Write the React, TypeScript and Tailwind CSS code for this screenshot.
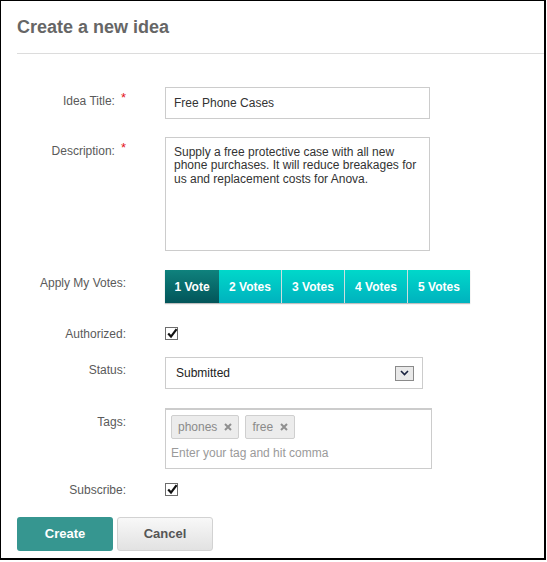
import React from "react";

const descriptionLines = [
  "Supply a free protective case with all new",
  "phone purchases. It will reduce breakages for",
  "us and replacement costs for Anova.",
];

const votes = ["1 Vote", "2 Votes", "3 Votes", "4 Votes", "5 Votes"];

function Label({ text, required, className = "" }: { text: string; required?: boolean; className?: string }) {
  return (
    <div className={`w-[125px] shrink-0 text-right text-[12px] leading-[16px] text-[#5a5a5a] ${className}`}>
      {text}
      {required && <span className="relative -top-[3px] ml-[6px] text-[13px] leading-none text-[#e4161b]">*</span>}
    </div>
  );
}

function Checkbox() {
  return (
    <div className="relative h-[13px] w-[13px] border border-[#6d6d6d] bg-white">
      <svg viewBox="0 0 13 13" className="absolute -top-px left-0 h-[13px] w-[13px]">
        <path d="M2.2 6.6 L5 9.6 L10.6 2.2" fill="none" stroke="#111" strokeWidth="2.2" />
      </svg>
    </div>
  );
}

function Chip({ text }: { text: string }) {
  return (
    <div className="flex h-[24px] items-center gap-[7px] rounded-[2px] border border-[#cfcfcf] bg-[#ececec] pl-[6px] pr-[6px] text-[12px] text-[#8a8a8a]">
      {text}
      <svg viewBox="0 0 8 8" className="h-[8px] w-[8px]">
        <path d="M1 1 L7 7 M7 1 L1 7" stroke="#8f8f8f" strokeWidth="2" />
      </svg>
    </div>
  );
}

export default function App() {
  return (
    <div className="h-[560px] w-[546px] border-t border-l border-r-2 border-b-2 border-black bg-white font-['Liberation_Sans',Arial,sans-serif]">
      {/* Header */}
      <div className="ml-[16px] border-b border-[#dcdcdc] pt-[15px] pb-[15px]">
        <h1 className="text-[18px] font-bold leading-[22px] text-[#666]">Create a new idea</h1>
      </div>

      {/* Idea title */}
      <div className="mt-[33px] flex items-start">
        <Label text="Idea Title:" required className="pt-[6px]" />
        <div className="ml-[39px] flex h-[32px] w-[265px] items-center border border-[#cccccc] pl-[8px] text-[12px] text-[#333]">
          Free Phone Cases
        </div>
      </div>

      {/* Description */}
      <div className="mt-[18px] flex items-start">
        <Label text="Description:" required className="pt-[6px]" />
        <div className="ml-[39px] h-[114px] w-[265px] border border-[#cccccc] pt-[8px] pl-[8px] text-[12px] leading-[13.3px] text-[#333]">
          {descriptionLines.map((line) => (
            <div key={line} className="whitespace-nowrap">{line}</div>
          ))}
        </div>
      </div>

      {/* Votes */}
      <div className="mt-[19px] flex items-start">
        <Label text="Apply My Votes:" className="pt-[5px]" />
        <div className="ml-[39px] flex h-[33px] shadow-[0_1px_1px_rgba(0,0,0,0.25)]">
          {votes.map((v, i) => (
            <React.Fragment key={v}>
              {i > 1 && <div className="w-px bg-[#cfdede]" />}
              <div
                className={
                  i === 0
                    ? "flex w-[54px] items-center justify-center bg-linear-to-b from-[#0f827d] to-[#03555a] text-[12px] font-bold text-white"
                    : "flex w-[62px] items-center justify-center bg-linear-to-b from-[#00d8ca] to-[#00b2be] text-[12px] font-bold text-white"
                }
              >
                {v}
              </div>
            </React.Fragment>
          ))}
        </div>
      </div>

      {/* Authorized */}
      <div className="mt-[24px] flex h-[13px] items-center">
        <Label text="Authorized:" />
        <div className="ml-[39px]">
          <Checkbox />
        </div>
      </div>

      {/* Status */}
      <div className="mt-[17px] flex items-start">
        <Label text="Status:" className="pt-[5px]" />
        <div className="ml-[39px] flex h-[32px] w-[258px] items-center justify-between border border-[#cccccc] pl-[10px] pr-[8px] text-[12px] text-[#222]">
          Submitted
          <div className="flex h-[15px] w-[19px] items-center justify-center border border-[#8a8a8a] bg-[#e9e9e9]">
            <svg viewBox="0 0 9 6" className="h-[6px] w-[9px]">
              <path d="M1 1 L4.5 4.5 L8 1" fill="none" stroke="#1a2340" strokeWidth="1.6" />
            </svg>
          </div>
        </div>
      </div>

      {/* Tags */}
      <div className="mt-[19px] flex items-start">
        <Label text="Tags:" className="pt-[6px]" />
        <div className="ml-[39px] h-[61px] w-[267px] border border-t-2 border-[#cccccc] pl-[5px] pt-[5px]">
          <div className="flex gap-[6px]">
            <Chip text="phones" />
            <Chip text="free" />
          </div>
          <div className="mt-[7px] text-[12px] leading-[14px] text-[#9a9a9a]">Enter your tag and hit comma</div>
        </div>
      </div>

      {/* Subscribe */}
      <div className="mt-[14px] flex h-[13px] items-center">
        <Label text="Subscribe:" />
        <div className="ml-[39px]">
          <Checkbox />
        </div>
      </div>

      {/* Actions */}
      <div className="mt-[21px] flex gap-[4px] pl-[16px]">
        <button className="h-[34px] w-[96px] rounded-[3px] bg-[#369690] text-[13px] font-bold text-white">Create</button>
        <button className="h-[34px] w-[96px] rounded-[3px] border border-[#d2d2d2] bg-linear-to-b from-[#f8f8f8] to-[#e2e2e2] text-[13px] font-bold text-[#555]">
          Cancel
        </button>
      </div>
    </div>
  );
}
